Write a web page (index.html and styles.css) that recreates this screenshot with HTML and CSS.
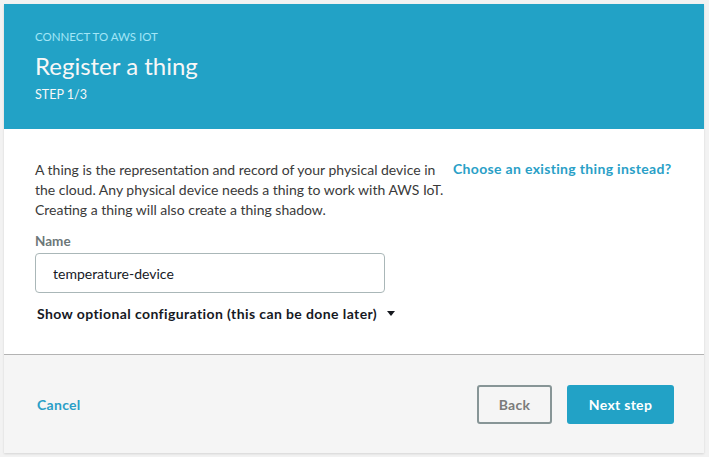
FILE: index.html
```html
<!DOCTYPE html>
<html lang="en">
<head>
<meta charset="utf-8">
<title>Register a thing</title>
<link rel="stylesheet" href="styles.css">
</head>
<body>
<div class="card">
  <header class="head">
    <div class="eyebrow">CONNECT TO AWS IOT</div>
    <h1 class="title">Register a thing</h1>
    <div class="step">STEP 1/3</div>
  </header>
  <section class="body">
    <div class="form">
      <p class="desc">A thing is the representation and record of your physical device in the cloud. Any physical device needs a thing to work with AWS IoT. Creating a thing will also create a thing shadow.</p>
      <label class="label" for="name">Name</label>
      <input class="input" id="name" type="text" value="temperature-device">
      <div class="optional">Show optional configuration (this can be done later)<span class="caret"></span></div>
    </div>
    <a class="existing" href="#">Choose an existing thing instead?</a>
  </section>
  <footer class="foot">
    <a class="cancel" href="#">Cancel</a>
    <div class="actions">
      <button class="btn btn-back">Back</button>
      <button class="btn btn-next">Next step</button>
    </div>
  </footer>
</div>
</body>
</html>
```
FILE: styles.css
```css
* { box-sizing: border-box; }
html, body { margin: 0; padding: 0; }
body {
  background: #f2f2f2;
  font-family: "Lato", "Open Sans", "Liberation Sans", sans-serif;
  padding: 4px 5px 4px 4px;
}
.card {
  width: 700px;
  background: #fff;
  box-shadow: 0 1px 2px rgba(0,0,0,0.12);
}
.head {
  background: #22a2c6;
  height: 125px;
  padding: 26px 31px 0;
}
.eyebrow {
  font-size: 11.5px;
  line-height: 14px;
  color: #a3e6f7;
}
.title {
  margin: 7px 0 0;
  font-size: 24px;
  font-weight: 400;
  line-height: 30px;
  color: #f7f7f7;
}
.step {
  margin-top: 6px;
  font-size: 12.5px;
  line-height: 15px;
  color: #f7f7f7;
}
.body {
  display: flex;
  align-items: flex-start;
  height: 226px;
  padding: 31px 31px 0;
  border-bottom: 1px solid #b3b3b3;
}
.form { width: 418px; }
.desc {
  margin: 0;
  font-size: 14px;
  line-height: 20px;
  color: #3a3a3a;
}
.label {
  display: block;
  margin-top: 13px;
  font-size: 13.5px;
  font-weight: 700;
  line-height: 17px;
  color: #6c7778;
}
.input {
  display: block;
  margin-top: 3px;
  width: 350px;
  height: 40px;
  border: 1px solid #aab7b8;
  border-radius: 4px;
  padding: 0 17px;
  font-family: inherit;
  font-size: 14px;
  color: #16191f;
}
.optional {
  margin-top: 12px;
  margin-left: 2px;
  display: flex;
  align-items: center;
  font-size: 14px;
  font-weight: 700;
  letter-spacing: 0.4px;
  line-height: 17px;
  color: #16191f;
}
.caret {
  margin-left: 10px;
  width: 0;
  height: 0;
  border-left: 4.5px solid transparent;
  border-right: 4.5px solid transparent;
  border-top: 5px solid #16191f;
}
.existing {
  font-size: 14px;
  font-weight: 700;
  letter-spacing: 0.33px;
  line-height: 18px;
  color: #2a9fc7;
  text-decoration: none;
}
.foot {
  background: #f5f5f5;
  height: 98px;
  display: flex;
  align-items: center;
  justify-content: space-between;
  padding: 0 30px 0 33px;
}
.cancel {
  font-size: 14px;
  font-weight: 700;
  letter-spacing: 0.3px;
  color: #2a9fc7;
  text-decoration: none;
}
.actions {
  display: flex;
  gap: 15px;
}
.btn {
  height: 39px;
  border-radius: 3px;
  font-family: inherit;
  font-size: 14px;
  font-weight: 700;
  letter-spacing: 0.3px;
}
.btn-back {
  width: 75px;
  background: #f5f5f5;
  border: 2px solid #879596;
  color: #7b7b7b;
}
.btn-next {
  width: 107px;
  background: #22a2c6;
  border: none;
  color: #fff;
}
```
